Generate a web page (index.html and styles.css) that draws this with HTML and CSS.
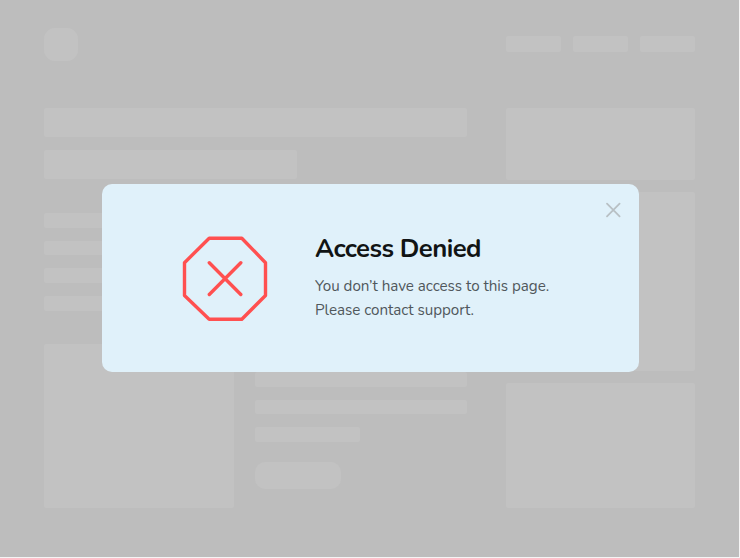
FILE: index.html
```html
<!DOCTYPE html>
<html lang="en">
<head>
<meta charset="utf-8">
<title>Access Denied</title>
<link rel="stylesheet" href="styles.css">
</head>
<body>
<div class="page">
  <header class="header">
    <div class="block logo"></div>
    <nav class="nav"><div class="block"></div><div class="block"></div><div class="block"></div></nav>
  </header>
  <main class="content">
    <section class="article">
      <div class="block heading"></div>
      <div class="block heading short"></div>
      <div class="lines intro"><div class="block"></div><div class="block"></div><div class="block"></div><div class="block half"></div></div>
      <div class="feature">
        <div class="block photo"></div>
        <div>
          <div class="lines"><div class="block"></div><div class="block"></div><div class="block"></div><div class="block half"></div></div>
          <div class="block button"></div>
        </div>
      </div>
    </section>
    <aside class="sidebar"><div class="block"></div><div class="block"></div><div class="block"></div></aside>
  </main>
</div>
<div class="overlay">
  <div class="dialog" role="dialog" aria-labelledby="title">
    <svg class="stop" viewBox="0 0 86 86" aria-hidden="true"><path d="M27.2 2.2H59.8L83.5 26.7V59.5L59.8 83.2H27.2L2.5 59.5V26.7ZM27.3 26.7 58.8 58.5M58.8 26.7 27.3 58.5"/></svg>
    <div class="message">
      <h1 id="title">Access Denied</h1>
      <p>You don’t have access to this page.<br>Please contact support.</p>
    </div>
    <button class="close" aria-label="Close"><svg viewBox="0 0 16 16"><path d="M2 1.7 14.6 14.3M14.6 1.7 2 14.3"/></svg></button>
  </div>
</div>
</body>
</html>
```
FILE: styles.css
```css
* { box-sizing: border-box; }
body { margin: 0; background: #f5f5f5; font-family: Nunito, Lato, sans-serif; overflow: hidden; }
.page { width: 739.3px; height: 557px; padding: 27.5px 44.4px 0; background: #bdbdbd; }
.block { background: #c2c2c2; border-radius: 2px; }
.header { display: flex; justify-content: space-between; align-items: center; height: 33px; }
.logo { width: 33.5px; height: 33px; border-radius: 11px; }
.nav { display: flex; gap: 12.3px; }
.nav .block { width: 54.8px; height: 16px; }
.content { display: grid; grid-template-columns: 423px 189px; justify-content: space-between; margin-top: 47.4px; }
.heading { height: 29px; }
.heading.short { width: 252.5px; height: 29.6px; margin-top: 13px; }
.lines { display: grid; gap: 13px; }
.lines .block { height: 14.7px; }
.lines .half { width: 105px; }
.intro { margin-top: 33.5px; }
.feature { display: grid; grid-template-columns: 189.2px 212px; justify-content: space-between; margin-top: 33.4px; }
.photo { height: 163.7px; }
.button { width: 86px; height: 27px; margin-top: 20px; border-radius: 10px; }
.sidebar { display: grid; grid-template-rows: 72px 178.5px 125px; gap: 12.3px; }
.overlay { position: absolute; inset: 0 0 2px; display: flex; align-items: center; justify-content: center; }
.dialog { position: relative; display: flex; align-items: center; width: 537px; height: 188px; padding-left: 80.4px; background: #e0f1fa; border-radius: 10px; }
.stop { width: 86px; height: 86px; margin-top: 1px; flex: none; fill: none; stroke: #ff5050; stroke-width: 3.4; stroke-linecap: round; stroke-linejoin: round; }
.message { margin: 0 0 2px 47.1px; white-space: nowrap; }
h1 { margin: 0; font-size: 25.7px; line-height: 34px; font-weight: 700; letter-spacing: -0.55px; color: #111414; }
p { margin: 8px 0 0; font-size: 15.2px; line-height: 24.5px; letter-spacing: -0.04px; color: #50585c; }
.close { position: absolute; top: 18px; right: 18px; width: 16px; height: 16px; padding: 0; border: 0; background: none; }
.close svg { display: block; fill: none; stroke: #b8c0c4; stroke-width: 1.8; stroke-linecap: round; }
```
